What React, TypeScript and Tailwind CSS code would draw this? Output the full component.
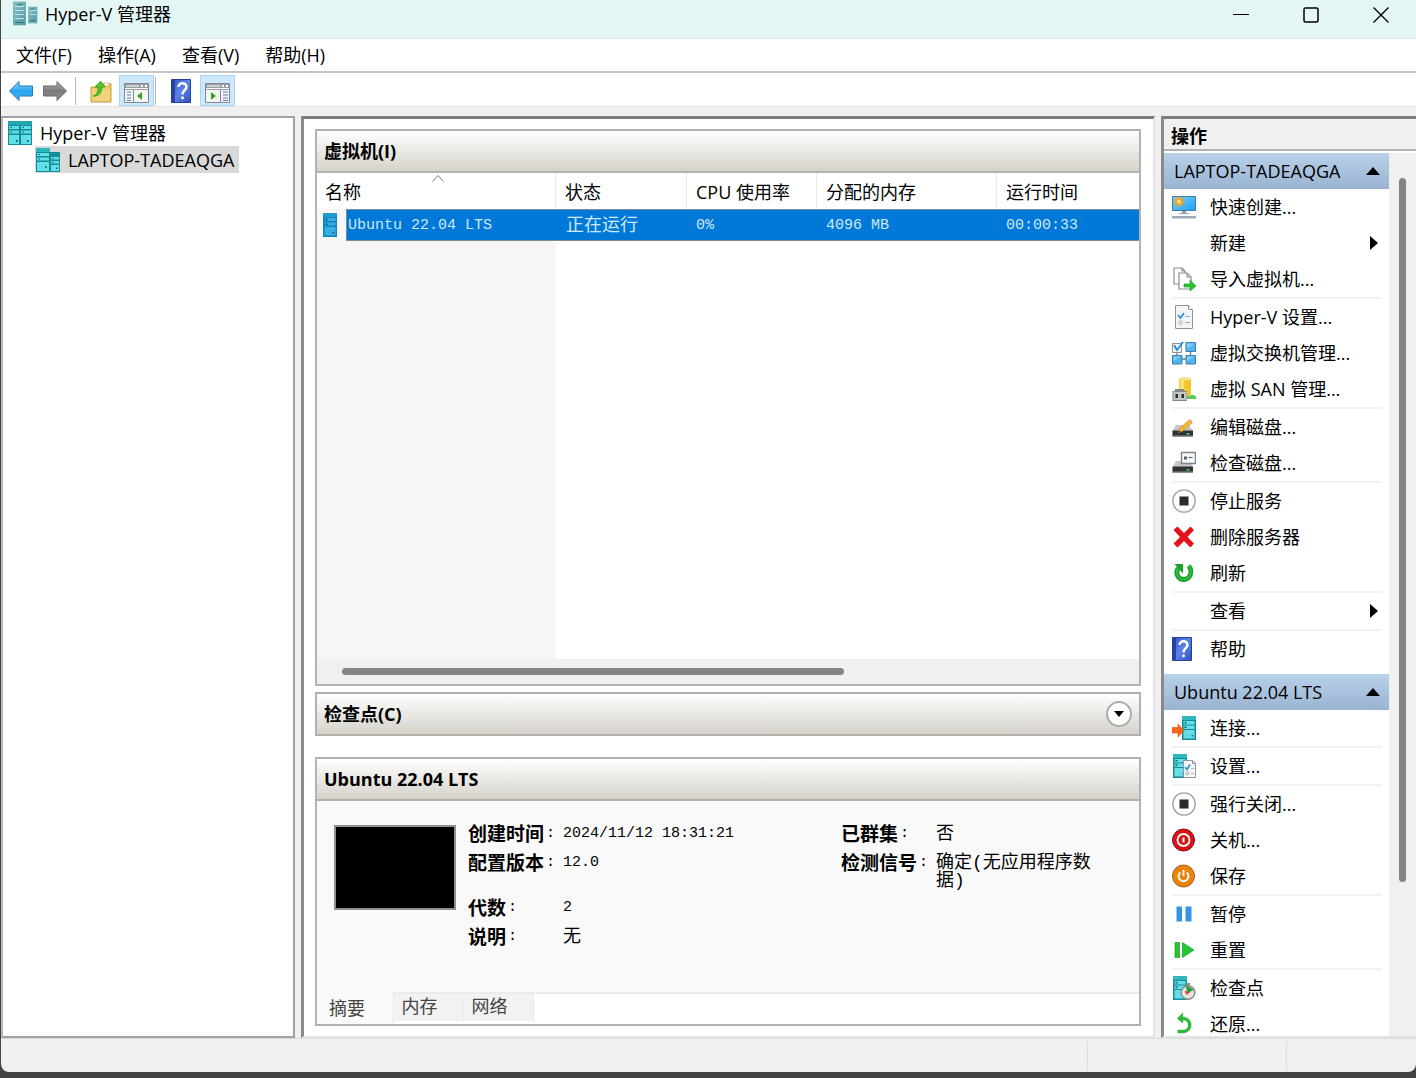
import { useState } from "react";
import type { ReactNode } from "react";

function ServerIcon({ className = "h-6 w-6" }: { className?: string }) {
  return (
    <svg viewBox="0 0 14 24" className={className}>
      <rect width="14" height="24" fill="#168a95" />
      <rect width="14" height="4" fill="#2fb7c0" />
      <rect x="1.5" y="5" width="11" height="3.5" fill="#66dfe8" />
      <rect x="1.5" y="9.5" width="11" height="3.5" fill="#66dfe8" />
      <rect x="1.5" y="14" width="11" height="8.5" fill="#66dfe8" />
      <path d="M2.5 6h2v1.5h-2zM2.5 10.5h2V12h-2zM9.5 19h1.5v1.5H9.5z" fill="#0b6570" />
    </svg>
  );
}

// the same server, tinted by the row selection
function SelectedServerIcon() {
  return (
    <svg viewBox="0 0 14 24" className="h-6 w-[14px]">
      <rect width="14" height="24" fill="#0f82b8" />
      <rect width="14" height="4" fill="#1f9bcb" />
      <path d="M1.500 5h11v3h-11zM1.500 9.500h11v3h-11zM1.500 14h11v8.500h-11z" fill="#35aee2" />
      <path d="M2.500 6h2v1.500h-2zM2.500 10.500h2V12h-2zM9.500 19H11v1.500H9.500z" fill="#07517f" />
    </svg>
  );
}

function AppIcon() {
  return (
    <svg viewBox="0 0 26 26" className="h-[26px] w-[26px]">
      <defs>
        <linearGradient id="appTeal" x2="1" y2="1">
          <stop offset="0" stopColor="#8cc3c9" />
          <stop offset="1" stopColor="#4d98a1" />
        </linearGradient>
      </defs>
      <rect x="1.500" y="2" width="12" height="23" fill="url(#appTeal)" stroke="#5b9fa7" strokeWidth=".6" />
      <path d="M3 6.500h9M3 10.500h9M3 14.500h9M3 18.500h9" stroke="#c3e4e7" />
      <path d="M5 4h5v1H5zM3 22h8v1H3z" fill="#2f737c" />
      <rect x="16.500" y="7" width="8.500" height="16" fill="url(#appTeal)" stroke="#6faab1" strokeWidth=".6" />
      <path d="M18 10.500h6M18 14.500h6" stroke="#c3e4e7" />
      <path d="M18 8.500h4v1h-4zM18 20h5v1h-5z" fill="#2f737c" />
    </svg>
  );
}

function TreeRootIcon() {
  return (
    <svg viewBox="0 0 24 24" className="h-6 w-6">
      <rect width="24" height="24" fill="#168a95" />
      <rect width="24" height="4" fill="#25a5af" />
      <path d="M1 5h10v3H1zM13 5h10v3H13zM1 9.500h10v3H1zM13 9.500h10v3H13zM1 14h10v9H1zM13 14h10v9H13z" fill="#5fe0e8" />
      <path d="M2.500 6h1.500v1H2.500zM14.500 6H16v1h-1.500zM2.500 10.500h1.500v1H2.500zM14.500 10.500H16v1h-1.500zM8 19h1.500v2H8zM19 19h1.500v2H19z" fill="#0b5f6a" />
    </svg>
  );
}

function TreeHostIcon() {
  return (
    <svg viewBox="0 0 24 24" className="h-6 w-6">
      <rect width="14" height="24" fill="#168a95" />
      <rect width="14" height="4" fill="#2fb7c0" />
      <path d="M1 5h12v3H1zM1 9.500h12v3H1zM1 14h12v9H1z" fill="#5fe0e8" />
      <path d="M2.500 6H4v1H2.500zM2.500 10.500H4v1H2.500zM9 18h1.500v2H9z" fill="#0b5f6a" />
      <rect x="13" y="4" width="11" height="20" fill="#168a95" />
      <path d="M15 9h8v2.500h-8zM15 13h8v2.500h-8zM15 17h8v6h-8z" fill="#5fe0e8" />
      <path d="M16 10h1.500v1H16zM16 14h1.500v1H16zM20 19.500h1.500V21H20z" fill="#0b5f6a" />
    </svg>
  );
}

function ArrowIcon({ forward = false }: { forward?: boolean }) {
  return (
    <svg viewBox="0 0 24 22" className="h-[22px] w-6">
      <defs>
        <linearGradient id="arrowBlue" x2="0" y2="1">
          <stop offset="0" stopColor="#8fd8ff" />
          <stop offset="0.5" stopColor="#2ba4f0" />
          <stop offset="1" stopColor="#45b4f5" />
        </linearGradient>
        <linearGradient id="arrowGray" x2="0" y2="1">
          <stop offset="0" stopColor="#b5b5b5" />
          <stop offset="0.5" stopColor="#7b7b7b" />
          <stop offset="1" stopColor="#909090" />
        </linearGradient>
      </defs>
      {forward ? (
        <path d="M23.500 11 14 1.500V6H.500v10H14v4.500z" fill="url(#arrowGray)" stroke="#6a6a6a" />
      ) : (
        <path d="M.500 11 10 1.500V6h13.500v10H10v4.500z" fill="url(#arrowBlue)" stroke="#2378b8" />
      )}
    </svg>
  );
}

function FolderUpIcon() {
  return (
    <svg viewBox="0 0 22 24" className="h-6 w-[22px]">
      <path d="M1 8h8l2-3h10v18H1z" fill="#ecc868" stroke="#c89a3c" />
      <path d="M2 10h18v12H2z" fill="#f3d47e" />
      <path d="M14 4h5v3h-5z" fill="#fff" stroke="#c89a3c" strokeWidth=".6" />
      <path d="M3 17c4-1 5-5 5-9H5l5.500-6L15 8h-3c0 6-4 10-9 9z" fill="#4fc52a" stroke="#2e9415" strokeWidth=".7" />
    </svg>
  );
}

function PaneIcon({ right = false }: { right?: boolean }) {
  return (
    <svg viewBox="0 0 25 22" className="h-[22px] w-[25px]">
      <path d="M.500 1.500h24v19H.500z" fill="#f5f5f5" stroke="#85898f" />
      <path d="M1 2h23v6H1z" fill="#9a9fa6" />
      <path d="M2 3.500h13v1H2zM17 3h2v2h-2zM21 3h2v2h-2zM1 6h23v1H1z" fill="#fff" />
      {right ? (
        <>
          <path d="M15.500 8v12" stroke="#85898f" />
          <path d="M18 10h5M18 13h5M18 16h5M18 18.500h5" stroke="#4f83bd" strokeWidth="1.200" />
          <path d="m6 10 5 4-5 4z" fill="#35a526" />
        </>
      ) : (
        <>
          <path d="M9.500 8v12" stroke="#85898f" />
          <path d="M3 10h4M3 13h4M3 16h4M3 18.500h4" stroke="#4f83bd" strokeWidth="1.200" />
          <path d="m18 10-5 4 5 4z" fill="#35a526" />
        </>
      )}
    </svg>
  );
}

function HelpIcon() {
  return (
    <svg viewBox="0 0 20 24" className="h-6 w-5">
      <defs>
        <linearGradient id="helpBlue" x2="1" y2="1">
          <stop offset="0" stopColor="#3457c8" />
          <stop offset="0.5" stopColor="#5c83e8" />
          <stop offset="1" stopColor="#2e50ba" />
        </linearGradient>
      </defs>
      <path d="M.500.500h19v23H.500z" fill="url(#helpBlue)" stroke="#24409b" />
      <path d="M1 1h3v22H1z" fill="#2741a4" />
      <path d="M7.500 8c0-5 8-5 8 0 0 3-4 3.500-4 7.500" fill="none" stroke="#fff" strokeWidth="2.400" />
      <circle cx="11.500" cy="18.800" r="1.500" fill="#fff" />
    </svg>
  );
}

function QuickCreateIcon() {
  return (
    <svg viewBox="0 0 24 24" className="h-6 w-6">
      <defs>
        <linearGradient id="screenBlue" x2="1" y2="1">
          <stop offset="0" stopColor="#7fd0fb" />
          <stop offset="1" stopColor="#1f9ff0" />
        </linearGradient>
      </defs>
      <path d="M.500 1.500h23v14H.500z" fill="url(#screenBlue)" stroke="#3a7ba8" />
      <path d="M10 16h4v2h3v1H7v-1h3z" fill="#93a6b8" />
      <path d="M0 21h24v2.500H0z" fill="#9aabc0" />
      <path d="m7 .500 1.300 3.100 3-1.300-1.300 3 3.100 1.400-3.100 1.300 1.300 3.100-3-1.300L7 12.900l-1.300-3.100-3 1.300L4 8 .900 6.700 4 5.300l-1.300-3 3 1.300z" fill="#f5a51c" />
      <circle cx="7" cy="6.700" r="2" fill="#ffe07a" />
    </svg>
  );
}

function ImportIcon() {
  return (
    <svg viewBox="0 0 24 24" className="h-6 w-6" fill="#fff" stroke="#8d8d8d" strokeWidth="1.200">
      <path d="M2 1h8l3 3v13H2z" />
      <path d="M7 6h8l4 4v12H7z" />
      <path d="M10 1v3h3M15 6v4h4" fill="none" />
      <path d="M12 17h6v-4l6 6-6 5v-4h-6z" fill="#25c52c" stroke="#159b20" strokeWidth=".6" />
    </svg>
  );
}

function SettingsPageIcon() {
  return (
    <svg viewBox="0 0 24 24" className="h-6 w-6">
      <path d="M3.500.500h13l4 4v19h-17z" fill="#f4f5f6" stroke="#8e9499" />
      <path d="M16.500.500v4h4" fill="#fff" stroke="#8e9499" />
      <path d="m6 10 2.500 3L12 8" fill="none" stroke="#2d93e2" strokeWidth="1.800" />
      <path d="M13 11.500h5M13 17.500h5" stroke="#a9adb1" />
      <path d="M7 16h3v3H7z" fill="none" stroke="#b5b9bd" />
    </svg>
  );
}

function SwitchIcon() {
  return (
    <svg viewBox="0 0 24 24" className="h-6 w-6">
      <path d="M10 18h5M18.500 10v5M5 10v5" stroke="#6f7f8b" strokeWidth="1.300" />
      <path d="M.500 2.500h9v9h-9z" fill="#f7f7f7" stroke="#8d9297" />
      <path d="m2 4 3 5 6-8" fill="none" stroke="#2290e0" strokeWidth="2" />
      <path d="M14 1.500h9.500v9H14zM.500 14.500H10v8.500H.500zM14 14.500h9.500v8.500H14z" fill="#4db4f1" stroke="#3d83b0" />
      <path d="M15 2.500h7.500L15 8zM1.500 15.500H9L1.500 20zM15 15.500h7.500L15 20z" fill="#83cefa" />
    </svg>
  );
}

function SanIcon() {
  return (
    <svg viewBox="0 0 24 24" className="h-6 w-6">
      <path d="M7 2c0-2 12-2 12 0v18H7z" fill="#f0c52e" />
      <path d="M8 3h4v16H8z" fill="#fae27a" />
      <ellipse cx="13" cy="2" rx="6" ry="1.500" fill="#f8e187" />
      <path d="M15 19h4v-1h3v1h2v3h-9z" fill="#57c958" />
      <path d="M1 14h2v-2h9v2h3v10H.500V14z" fill="#85898c" />
      <path d="M1.500 15h13v8h-13z" fill="#c3c6c8" />
      <path d="M3.500 17H6v4H3.500zM9.500 17H12v4H9.500z" fill="#292d30" />
    </svg>
  );
}

function DiskIcon({ inspect = false }: { inspect?: boolean }) {
  return (
    <svg viewBox="0 0 24 24" className="h-6 w-6">
      <path d="M4 10h13l4 6H.500z" fill="#c5c7c8" />
      <path d="M.500 15.500h20.500v6H.500z" fill="#303333" />
      <path d="M.500 20.500h20.500v1.500H.500z" fill="#8e9292" />
      <path d="M14.500 18h3v1.500h-3z" fill="#41dc4a" />
      {inspect ? (
        <>
          <path d="M9.500 1.500h14v11h-14z" fill="#f5f7f8" stroke="#7e878e" strokeWidth="1.400" />
          <path d="M12 5.500h3v3h-3z" fill="#596168" />
          <path d="M16.500 6.500h4" stroke="#596168" />
        </>
      ) : (
        <>
          <path d="m6 18 1.500-4.500L17 5l3 3-10 8.500z" fill="#f4b731" stroke="#c98a1a" strokeWidth=".5" />
          <path d="m17 5 1-1 3 3-1 1z" fill="#ef9b9b" />
          <path d="m6 18 1-3 2 2z" fill="#5e4426" />
        </>
      )}
    </svg>
  );
}

function StopIcon() {
  return (
    <svg viewBox="0 0 24 24" className="h-6 w-6">
      <circle cx="12" cy="12" r="11.200" fill="#fcfcfc" stroke="#a2a2a2" strokeWidth="1.300" />
      <path d="M7.500 7.500h9v9h-9z" fill="#2b2b2b" />
    </svg>
  );
}

function DeleteIcon() {
  return (
    <svg viewBox="0 0 24 24" className="h-6 w-6">
      <path d="m1.500 5 4-3.500L12 8l6.500-6.500 3.500 3.500-6.500 7 6.500 6.500-3.500 4L12 16l-6.500 6.500-4-4L8 12z" fill="#e31118" />
    </svg>
  );
}

function RefreshIcon() {
  return (
    <svg viewBox="0 0 24 24" className="h-6 w-6">
      <path d="M6.500 7C2.500 12 6 18.500 12 18.500S21.500 10 16.500 5" fill="none" stroke="#17a327" strokeWidth="4.800" />
      <path d="M6.500 7C2.500 12 6 18.500 12 18.500S21.500 10 16.500 5" fill="none" stroke="#36bf43" strokeWidth="1.500" />
      <path d="M2.500 3H11v9.500z" fill="#17a327" />
    </svg>
  );
}

function ConnectIcon() {
  return (
    <svg viewBox="0 0 24 24" className="h-6 w-6">
      <svg x="10" width="14" height="24">
        <ServerIcon className="" />
      </svg>
      <path d="M0 11.500h6V8l6 6.500L6 21v-4H0z" fill="#f9691a" stroke="#d9500c" strokeWidth=".6" />
    </svg>
  );
}

function VmSettingsIcon() {
  return (
    <svg viewBox="0 0 24 24" className="h-6 w-6">
      <svg x="1" width="14" height="24">
        <ServerIcon className="" />
      </svg>
      <path d="M11.500 6.500h9l3 3v14h-12z" fill="#f4f5f6" stroke="#8e9499" />
      <path d="M20.500 6.500v3h3" fill="none" stroke="#8e9499" />
      <path d="m13 13 2 2.500 3-5" fill="none" stroke="#2d93e2" strokeWidth="1.600" />
      <path d="M19 14.500h3M19 19.500h3M14 18h2.500v2.500H14z" fill="none" stroke="#b2b6ba" />
    </svg>
  );
}

function ShutdownIcon() {
  return (
    <svg viewBox="0 0 24 24" className="h-6 w-6">
      <circle cx="11.500" cy="12" r="11" fill="#d7141a" stroke="#8d1212" />
      <circle cx="11.500" cy="12" r="6" fill="none" stroke="#fff" strokeWidth="1.800" />
      <path d="M11.500 9.500v5" stroke="#fff" strokeWidth="2" />
    </svg>
  );
}

function SaveIcon() {
  return (
    <svg viewBox="0 0 24 24" className="h-6 w-6">
      <circle cx="11.500" cy="12" r="11" fill="#e68510" stroke="#a85f10" />
      <path d="M8.200 8.500a5 5 0 1 0 6.600 0M11.500 6v6" fill="none" stroke="#fff" strokeWidth="1.900" />
    </svg>
  );
}

function PauseIcon() {
  return (
    <svg viewBox="0 0 24 24" className="h-6 w-6">
      <path d="M4.500 4.500H10v15H4.500zM13.500 4.500h6v15h-6z" fill="#3595e4" />
    </svg>
  );
}

function ResetIcon() {
  return (
    <svg viewBox="0 0 24 24" className="h-6 w-6">
      <path d="M3 4.500h4.500v15H3zM10.500 4.500 22 12l-11.500 7.500z" fill="#27c433" stroke="#17a327" strokeWidth=".7" />
    </svg>
  );
}

function CheckpointIcon() {
  return (
    <svg viewBox="0 0 24 24" className="h-6 w-6">
      <svg x="1" width="14" height="24">
        <ServerIcon className="" />
      </svg>
      <path d="M14 7h4v2h-4z" fill="#8c8c8c" />
      <circle cx="16" cy="16.500" r="6.800" fill="#e6e6e6" stroke="#8b8b8b" strokeWidth="1.500" />
      <path d="m14 9 8 5-7 3z" fill="#2d9c3a" />
      <path d="m12.500 15 6 1-4 3z" fill="#d44a3a" />
    </svg>
  );
}

function RevertIcon() {
  return (
    <svg viewBox="0 0 24 24" className="h-6 w-6">
      <path d="M9 6.500h2c9 0 9 13 0 13H5.500" fill="none" stroke="#2db83a" strokeWidth="3.400" />
      <path d="M5 6.500 11 .500v11z" fill="#2db83a" />
    </svg>
  );
}

type Action = { label: string; icon?: ReactNode; submenu?: boolean };

// every inner array is one group, groups are split by a thin rule
const hostActions: Action[][] = [
  [
    { label: "快速创建...", icon: <QuickCreateIcon /> },
    { label: "新建", submenu: true },
    { label: "导入虚拟机...", icon: <ImportIcon /> },
  ],
  [
    { label: "Hyper-V 设置...", icon: <SettingsPageIcon /> },
    { label: "虚拟交换机管理...", icon: <SwitchIcon /> },
    { label: "虚拟 SAN 管理...", icon: <SanIcon /> },
  ],
  [
    { label: "编辑磁盘...", icon: <DiskIcon /> },
    { label: "检查磁盘...", icon: <DiskIcon inspect /> },
  ],
  [
    { label: "停止服务", icon: <StopIcon /> },
    { label: "删除服务器", icon: <DeleteIcon /> },
    { label: "刷新", icon: <RefreshIcon /> },
  ],
  [{ label: "查看", submenu: true }],
  [{ label: "帮助", icon: <HelpIcon /> }],
];

const vmActions: Action[][] = [
  [{ label: "连接...", icon: <ConnectIcon /> }],
  [{ label: "设置...", icon: <VmSettingsIcon /> }],
  [
    { label: "强行关闭...", icon: <StopIcon /> },
    { label: "关机...", icon: <ShutdownIcon /> },
    { label: "保存", icon: <SaveIcon /> },
  ],
  [
    { label: "暂停", icon: <PauseIcon /> },
    { label: "重置", icon: <ResetIcon /> },
  ],
  [
    { label: "检查点", icon: <CheckpointIcon /> },
    { label: "还原...", icon: <RevertIcon /> },
  ],
];

function ActionSection({ title, groups }: { title: string; groups: Action[][] }) {
  const [open, setOpen] = useState(true);

  return (
    <section>
      <button
        onClick={() => setOpen(!open)}
        className="flex h-9 w-full items-center justify-between bg-linear-to-b from-[#b9d1ea] to-[#99b4d1] pr-2 pl-[10px]"
      >
        {title}
        <svg viewBox="0 0 16 8" className="h-2 w-4">
          <path d="M8 0l7 8H1z" />
        </svg>
      </button>
      {open &&
        groups.map((group, index) => (
          <div key={index}>
            {index > 0 && <div className="mr-[7px] ml-2 h-[2px] bg-[#f2f2f2]" />}
            {group.map((action) => (
              <button
                key={action.label}
                className="flex h-9 w-full items-center pr-[11px] pl-2 text-left"
              >
                <span className="mr-[14px] w-6">{action.icon}</span>
                <span className="grow whitespace-nowrap">{action.label}</span>
                {action.submenu && (
                  <svg viewBox="0 0 8 14" className="h-[14px] w-2">
                    <path d="M0 0l8 7-8 7z" />
                  </svg>
                )}
              </button>
            ))}
          </div>
        ))}
    </section>
  );
}

function Detail({ label, children }: { label: string; children: ReactNode }) {
  return (
    <div className="flex h-[18px]">
      <dt className="flex w-[95px] shrink-0 text-[19px] font-bold">
        {label}
        <span className="pl-[2px] font-['Liberation_Mono'] text-[15px] font-normal">:</span>
      </dt>
      <dd className="font-['Liberation_Mono','Noto_Sans_CJK_SC',monospace] text-[15px]">
        {children}
      </dd>
    </div>
  );
}

const tabs = ["摘要", "内存", "网络"];

export default function App() {
  const [tab, setTab] = useState("摘要");

  return (
    <div className="h-screen overflow-hidden bg-[#454343] pb-[6px] pl-px font-['Open_Sans','Noto_Sans_CJK_SC',sans-serif] text-[18px] leading-6 text-black">
      <div className="flex h-full flex-col overflow-hidden rounded-b-lg bg-[#f0f0f0]">
        <header className="flex h-[39px] shrink-0 items-start border-b border-[#dfe6e5] bg-[#e4f7f5] pl-[11px]">
          <AppIcon />
          <h1 className="ml-[7px] grow pt-[2px]">Hyper-V 管理器</h1>
          <div className="flex">
            <button aria-label="最小化" className="flex h-[29px] w-[70px] items-center justify-center">
              <svg viewBox="0 0 16 16" className="h-4 w-4" stroke="#000">
                <path d="M0 7.500h16" />
              </svg>
            </button>
            <button aria-label="最大化" className="flex h-[29px] w-[70px] items-center justify-center">
              <svg viewBox="0 0 16 16" className="h-4 w-4" fill="none" stroke="#000" strokeWidth="1.500">
                <rect x="1" y="1" width="14" height="14" rx="1.500" />
              </svg>
            </button>
            <button aria-label="关闭" className="flex h-[29px] w-[70px] items-center justify-center">
              <svg viewBox="0 0 16 16" className="h-4 w-4" stroke="#000" strokeWidth="1.400">
                <path d="M.500.500l15 15M15.500.500l-15 15" />
              </svg>
            </button>
          </div>
        </header>

        <nav className="flex h-[34px] shrink-0 items-center gap-[26px] border-b-2 border-[#c3c5c6] bg-white px-[15px]">
          <button>文件(F)</button>
          <button>操作(A)</button>
          <button>查看(V)</button>
          <button>帮助(H)</button>
        </nav>

        <div className="flex h-[34px] shrink-0 items-center border-b border-[#e3e3e3] bg-white pt-[2px] pl-2">
          <button aria-label="后退">
            <ArrowIcon />
          </button>
          <button aria-label="前进" className="ml-[10px]">
            <ArrowIcon forward />
          </button>
          <div className="ml-2 h-7 w-px bg-[#b9b9b9]" />
          <button aria-label="向上" className="ml-[14px]">
            <FolderUpIcon />
          </button>
          <button
            aria-label="显示/隐藏控制台树"
            className="ml-[7px] flex h-[31px] w-[35px] items-center justify-center border border-[#a9d5f7] bg-[#cce8ff] pt-1"
          >
            <PaneIcon />
          </button>
          <div className="ml-px h-7 w-px bg-[#b9b9b9]" />
          <button aria-label="帮助" className="ml-[15px]">
            <HelpIcon />
          </button>
          <button
            aria-label="显示/隐藏操作窗格"
            className="ml-[9px] flex h-[31px] w-[35px] items-center justify-center border border-[#a9d5f7] bg-[#cce8ff] pt-1"
          >
            <PaneIcon right />
          </button>
        </div>

        <main className="flex min-h-0 grow gap-[6px] pt-[9px]">
          <aside className="w-[294px] shrink-0 border-2 border-[#a0a2aa] border-l-[#b5b7bd] bg-white pt-px">
            <ul>
              <li className="flex h-[27px] items-center pl-[5px]">
                <TreeRootIcon />
                <span className="ml-2">Hyper-V 管理器</span>
              </li>
              <li className="ml-8 flex h-[27px] w-fit items-center bg-[#d9d9d9] pr-[5px] pl-[1px]">
                <TreeHostIcon />
                <span className="ml-2">LAPTOP-TADEAQGA</span>
              </li>
            </ul>
          </aside>

          <div className="flex min-w-0 grow flex-col border-t-3 border-r-2 border-b-2 border-l-3 border-t-[#7c7c7c] border-r-[#e3e3e3] border-b-[#e3e3e3] border-l-[#8a8a8a] bg-white pt-[10px] pr-[12px] pb-[10px] pl-[11px]">
            <section className="flex min-h-0 grow flex-col border-2 border-[#b2b2b2]">
              <h2 className="flex h-[42px] shrink-0 items-center border-b-2 border-[#b2b2b2] bg-linear-to-b from-white to-[#d5d2ca] px-[7px] font-bold">
                虚拟机(I)
              </h2>
              <table className="w-full table-fixed border-separate border-spacing-0 text-left">
                <thead>
                  <tr className="h-9">
                    <th className="relative w-[239px] border-r border-[#e8e8e8] pt-px pl-2 font-normal">
                      名称
                      <svg viewBox="0 0 12 7" className="absolute top-[2px] left-[115px] h-[7px] w-3" fill="none" stroke="#777">
                        <path d="M.500 6.500l5.500-6 5.500 6" />
                      </svg>
                    </th>
                    <th className="w-[131px] border-r border-[#e8e8e8] pt-px pl-[9px] font-normal">状态</th>
                    <th className="w-[130px] border-r border-[#e8e8e8] pt-px pl-[9px] font-normal">CPU 使用率</th>
                    <th className="w-[180px] border-r border-[#e8e8e8] pt-px pl-[9px] font-normal">分配的内存</th>
                    <th className="pt-px pl-[9px] font-normal">运行时间</th>
                  </tr>
                </thead>
                <tbody className="font-['Liberation_Mono','Noto_Sans_CJK_SC',monospace] text-[15px] text-[#cfe8fc]">
                  <tr className="h-8 bg-[#0078d7]">
                    <td className="bg-[#f7f7f7] p-0">
                      <div className="flex items-center pl-[6px]">
                        <SelectedServerIcon />
                        <span className="ml-[9px] flex h-8 grow items-center border-y border-l border-[#7d8b96] bg-[#0078d7] pt-px pl-px">
                          Ubuntu 22.04 LTS
                        </span>
                      </div>
                    </td>
                    <td className="border-y border-[#7d8b96] pt-px pb-0 pl-[10px] text-[18px]">正在运行</td>
                    <td className="border-y border-[#7d8b96] pt-px pb-0 pl-[9px]">0%</td>
                    <td className="border-y border-[#7d8b96] pt-px pb-0 pl-[9px]">4096 MB</td>
                    <td className="border-y border-[#7d8b96] pt-px pb-0 pl-[9px]">00:00:33</td>
                  </tr>
                </tbody>
              </table>
              <div className="w-[239px] grow bg-[#f6f6f6]" />
              <div className="flex h-[25px] shrink-0 items-center bg-[#f0f0f0] px-[25px]">
                <div className="h-[7px] w-[65%] rounded-sm bg-[#858585]" />
              </div>
            </section>

            <section className="mt-[6px] flex h-11 shrink-0 items-center justify-between border-2 border-[#b2b1af] bg-linear-to-b from-white to-[#d5d2ca] px-[7px]">
              <h2 className="font-bold">检查点(C)</h2>
              <button
                aria-label="展开"
                className="flex h-[26px] w-[26px] items-center justify-center rounded-full border-2 border-[#adadad] bg-white"
              >
                <svg viewBox="0 0 12 6" className="h-[6px] w-3">
                  <path d="M1 0h10L6 6z" />
                </svg>
              </button>
            </section>

            <section className="mt-[21px] flex h-[269px] shrink-0 flex-col border-2 border-[#b2b2b2] bg-[#f9f9f9]">
              <h2 className="flex h-[42px] shrink-0 items-center border-b-2 border-[#b2b2b2] bg-linear-to-b from-white to-[#d5d2ca] px-[7px] font-bold">
                Ubuntu 22.04 LTS
              </h2>
              <div className="flex grow pt-6 pl-[17px]">
                <div className="h-[85px] w-[122px] shrink-0 border-2 border-[#8f8f8f] bg-black" />
                <dl className="ml-3 w-[373px] shrink-0 leading-[18px]">
                  <Detail label="创建时间">2024/11/12 18:31:21</Detail>
                  <div className="mt-[11px]">
                    <Detail label="配置版本">12.0</Detail>
                  </div>
                  <div className="mt-[27px]">
                    <Detail label="代数">2</Detail>
                  </div>
                  <div className="mt-[11px]">
                    <Detail label="说明">
                      <span className="text-[18px]">无</span>
                    </Detail>
                  </div>
                </dl>
                <dl className="w-[254px] leading-[18px]">
                  <Detail label="已群集">
                    <span className="text-[18px]">否</span>
                  </Detail>
                  <div className="mt-[11px]">
                    <Detail label="检测信号">
                      <span className="block text-[18px]">确定(无应用程序数据)</span>
                    </Detail>
                  </div>
                </dl>
              </div>
              <div className="flex h-8 shrink-0 items-start bg-white text-[#444]">
                {tabs.map((name) => (
                  <button
                    key={name}
                    onClick={() => setTab(name)}
                    className={
                      name === tab
                        ? "h-8 w-[77px] border-r border-[#e8e8e8] bg-[#f9f9f9] pr-4"
                        : "h-[29px] w-[70px] border-t-2 border-r border-[#ebebeb] bg-[#f2f2f2] pr-[18px] pb-2"
                    }
                  >
                    {name}
                  </button>
                ))}
                <div className="h-[2px] grow bg-[#ebebeb]" />
              </div>
            </section>
          </div>

          <aside className="flex w-[255px] shrink-0 flex-col border-t-3 border-b-2 border-l-3 border-t-[#7c7c7c] border-b-[#e3e3e3] border-l-[#8a8a8a]">
            <h2 className="flex h-8 shrink-0 items-center border-b-2 border-[#b2b2b2] pt-1 pl-[7px] font-bold">
              操作
            </h2>
            <div className="flex min-h-0 grow border-t-2 border-white">
              <div className="flex grow flex-col gap-[7px] overflow-hidden bg-white">
                <ActionSection title="LAPTOP-TADEAQGA" groups={hostActions} />
                <ActionSection title="Ubuntu 22.04 LTS" groups={vmActions} />
              </div>
              <div className="w-[27px] shrink-0 pt-[25px] pl-[10px]">
                <div className="h-[82%] w-[7px] rounded-sm bg-[#858585]" />
              </div>
            </div>
          </aside>
        </main>

        <footer className="flex h-[34px] shrink-0 justify-end border-t border-[#dcdcdc]">
          <div className="my-[2px] w-[199px] border-l border-[#dcdcdc]" />
          <div className="my-[2px] w-[130px] border-l border-[#dcdcdc]" />
        </footer>
      </div>
    </div>
  );
}
